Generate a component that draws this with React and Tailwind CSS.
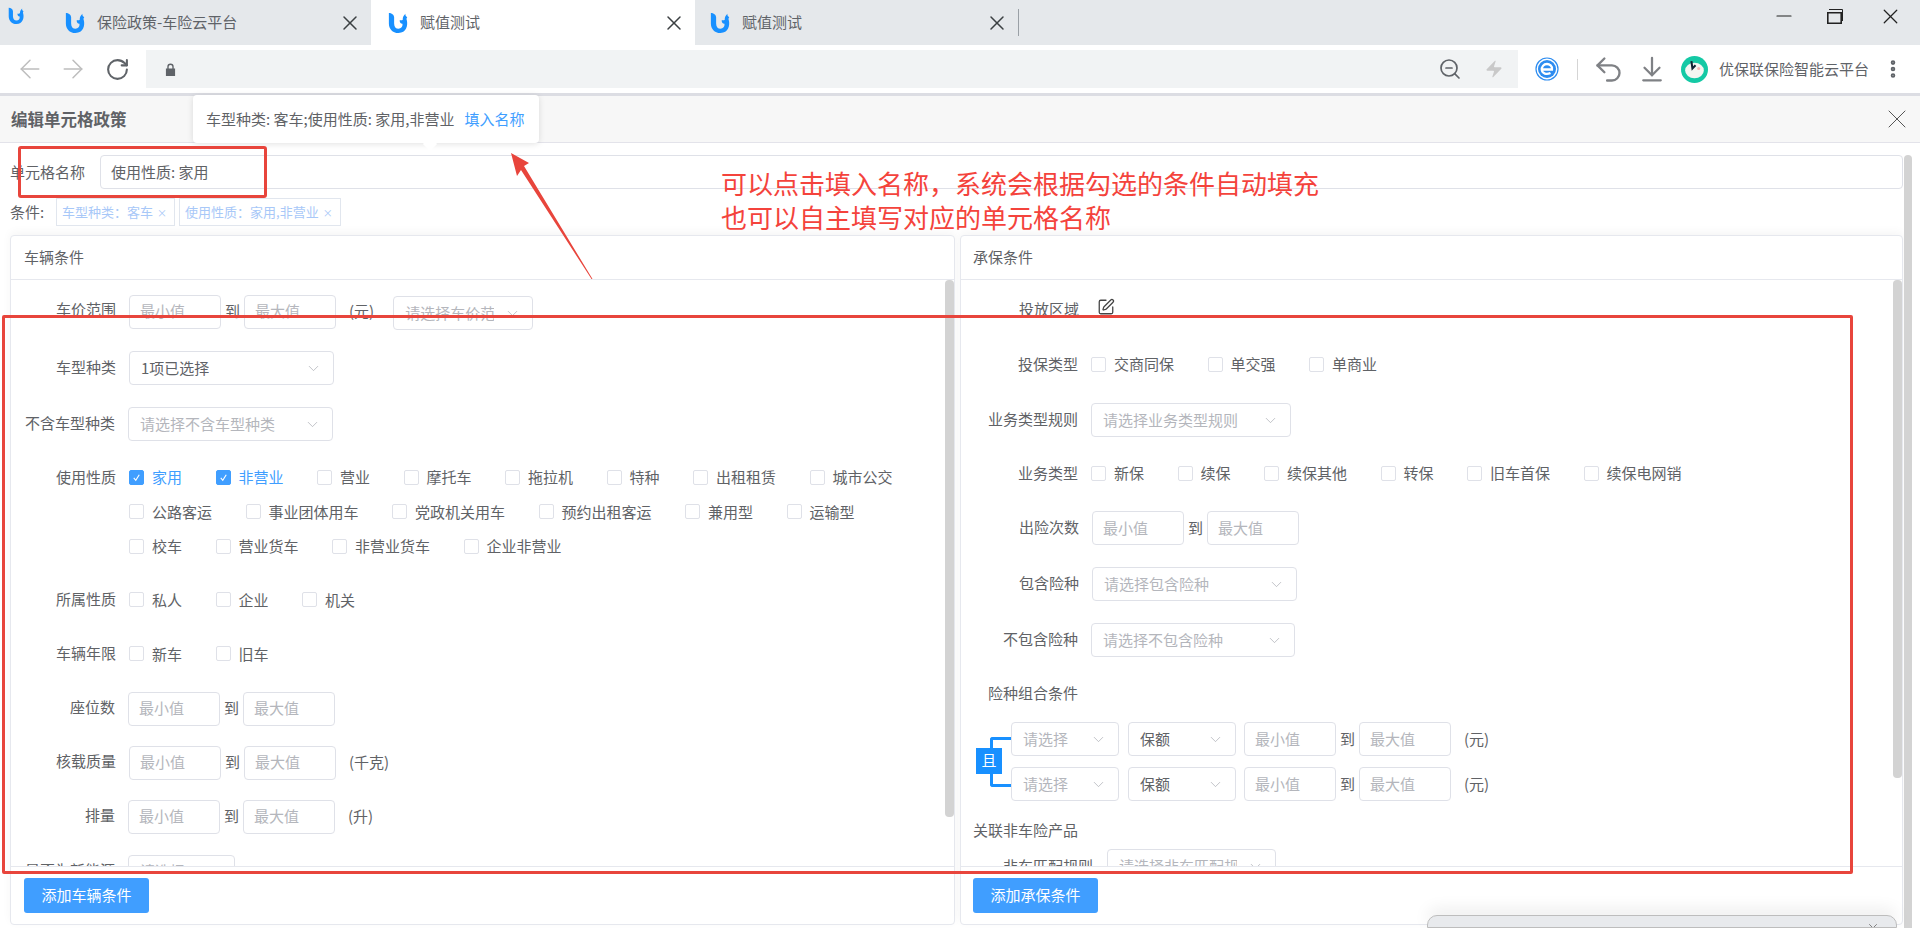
import React from "react";
import { ArrowLeft, ArrowRight, RotateCw, ZoomOut, Zap, Undo2, ArrowDownToLine, EllipsisVertical, X, Minus, SquarePen, ChevronDown } from "lucide-react";

const Logo = ({ className }) => (
  <svg viewBox="0 0 24 24" className={className}>
    <path
      fill="#1890ff"
      d="M1 1C4 1 7 3 7 6V13C7 17 9 19 12 19C15 19 17 17 16.5 13.5C14 13 13 11 13.5 9C15 10 16 9.5 17 8.5C16.5 7 17.5 4 20 2C19.5 4 20.5 5 22 6C21 7 21 8 21.5 9.5C23 15 21 24 12 24C5 24 1 19 1 13Z"
    />
  </svg>
);

const Tab = ({ title, active, width, left }) => (
  <div className={`flex items-center h-[45px] ${width} ${left} pr-[9px] ${active ? "bg-white" : ""}`}>
    <Logo className="w-[21px] h-[23px] shrink-0" />
    <span className="ml-[11px] text-[15px] text-[#5f6368]">{title}</span>
    <X size={24} strokeWidth={1.5} className="ml-auto text-[#3c4043]" />
  </div>
);

const Checkbox = ({ label, checked }) => (
  <div className="flex items-center h-full">
    <span
      className={`w-[15px] h-[15px] rounded-[2px] border flex items-center justify-center ${
        checked ? "bg-[#409eff] border-[#409eff]" : "bg-white border-[#dfe1e8]"
      }`}
    >
      {checked && (
        <svg viewBox="0 0 12 12" className="w-[11px] h-[11px]">
          <path d="M3 6.5L5.2 9L9 3" fill="none" stroke="white" strokeWidth="1.2" />
        </svg>
      )}
    </span>
    <span className={`ml-[8px] ${checked ? "text-[#409eff]" : "text-[#606266]"}`}>{label}</span>
  </div>
);

const CheckGroup = ({ items, checked = [] }) => (
  <div className="flex flex-wrap gap-x-[33.5px] w-[780px]">
    {items.map((item) => (
      <div key={item} className="h-[34.5px]">
        <Checkbox label={item} checked={checked.includes(item)} />
      </div>
    ))}
  </div>
);

const NumInput = ({ placeholder }) => (
  <div className="w-[92px] h-[34px] border border-[#dfe1e8] rounded-[4px] pl-[10px] flex items-center text-[#b4b6bc] bg-white shrink-0">
    {placeholder}
  </div>
);

const Range = ({ unit }) => (
  <div className="flex items-center">
    <NumInput placeholder="最小值" />
    <span className="mx-[4px] text-[#606266]">到</span>
    <NumInput placeholder="最大值" />
    {unit && <span className="ml-[13px] text-[#606266]">{unit}</span>}
  </div>
);

const Select = ({ width, text, value }) => (
  <div className={`${width} h-[34px] border border-[#dfe1e8] rounded-[4px] pl-[11px] pr-[11px] flex items-center justify-between gap-[10px] bg-white shrink-0`}>
    <span className={`min-w-0 overflow-hidden whitespace-nowrap ${value ? "text-[#606266]" : "text-[#b4b6bc]"}`}>{text}</span>
    <ChevronDown size={17} strokeWidth={1} className="text-[#a8abb2] shrink-0" />
  </div>
);

const Row = ({ label, labelW, margin, children, tall, check }) => (
  <div className={`flex ${margin} ${tall ? "" : "h-[34px] items-center"}`}>
    <div className={`${labelW} shrink-0 text-right text-[#606266] whitespace-nowrap ${check ? "" : "pb-[2px]"} ${tall ? "h-[34.5px] flex items-center justify-end" : ""}`}>
      {label}
    </div>
    <div className="ml-[13px] h-full">{children}</div>
  </div>
);

const Panel = ({ title, button, width, thumb, pad, children }) => (
  <div className={`${width} h-[690px] border border-[#e6e8ee] rounded-[4px] bg-white shadow-[0_-3px_10px_rgba(0,0,0,0.04)] flex flex-col`}>
    <div className={`h-[44px] shrink-0 border-b border-[#e6e8ee] ${pad} flex items-center text-[#606266]`}>{title}</div>
    <div className="flex h-[587px] shrink-0 border-b border-[#e6e8ee]">
      <div className="flex-1 overflow-hidden">{children}</div>
      <div className={`w-[9px] ${thumb} bg-[#d3d3d3] rounded-t-[4px] rounded-b-[4px]`} />
    </div>
    <div className={`${pad} pt-[11px]`}>
      <button className="w-[125px] h-[35px] rounded-[3px] bg-[#409eff] text-white text-[15px]">{button}</button>
    </div>
  </div>
);

const CoverRow = () => (
  <div className="flex items-center">
    <Select width="w-[108px]" text="请选择" />
    <div className="ml-[9px]">
      <Select width="w-[108px]" text="保额" value />
    </div>
    <div className="ml-[8px]">
      <Range unit="(元)" />
    </div>
  </div>
);

const LeftPanel = () => {
  const w = "w-[105px]";
  const ws = "w-[104px]";
  return (
    <Panel title="车辆条件" button="添加车辆条件" width="w-[945px]" thumb="h-[537px]" pad="pl-[13px]">
      <Row label="车价范围" labelW={w} margin="mt-[13px]">
        <div className="flex items-center">
          <Range unit="(元)" />
          <div className="ml-[19px] mt-[3px]">
            <Select width="w-[140px]" text="请选择车价范围" />
          </div>
        </div>
      </Row>
      <Row label="车型种类" labelW={w} margin="mt-[24px]">
        <Select width="w-[205px]" text="1项已选择" value />
      </Row>
      <Row label="不含车型种类" labelW={ws} margin="mt-[22px]">
        <Select width="w-[205px]" text="请选择不含车型种类" />
      </Row>
      <Row label="使用性质" labelW={w} margin="mt-[19px]" tall check>
        <CheckGroup
          checked={["家用", "非营业"]}
          items={["家用", "非营业", "营业", "摩托车", "拖拉机", "特种", "出租租赁", "城市公交", "公路客运", "事业团体用车", "党政机关用车", "预约出租客运", "兼用型", "运输型", "校车", "营业货车", "非营业货车", "企业非营业"]}
        />
      </Row>
      <Row label="所属性质" labelW={w} margin="mt-[19px]" check>
        <CheckGroup items={["私人", "企业", "机关"]} />
      </Row>
      <Row label="车辆年限" labelW={w} margin="mt-[20px]" check>
        <CheckGroup items={["新车", "旧车"]} />
      </Row>
      <Row label="座位数" labelW={ws} margin="mt-[21px]">
        <Range />
      </Row>
      <Row label="核载质量" labelW={w} margin="mt-[20px]">
        <Range unit="(千克)" />
      </Row>
      <Row label="排量" labelW={ws} margin="mt-[20px]">
        <Range unit="(升)" />
      </Row>
      <Row label="是否为新能源" labelW={ws} margin="mt-[21px]">
        <Select width="w-[107px]" text="请选择" />
      </Row>
    </Panel>
  );
};

const RightPanel = () => {
  const w = "w-[118px]";
  const ws = "w-[117px]";
  return (
    <Panel title="承保条件" button="添加承保条件" width="flex-1" thumb="h-[498px]" pad="pl-[12px]">
      <Row label="投放区域" labelW={w} margin="mt-[13px]">
        <div className="flex items-center h-full ml-[5px]">
          <SquarePen size={18} strokeWidth={1.7} className="text-[#444] -mt-[6px]" />
        </div>
      </Row>
      <Row label="投保类型" labelW={ws} margin="mt-[20px]" check>
        <CheckGroup items={["交商同保", "单交强", "单商业"]} />
      </Row>
      <Row label="业务类型规则" labelW={ws} margin="mt-[22px]">
        <Select width="w-[200px]" text="请选择业务类型规则" />
      </Row>
      <Row label="业务类型" labelW={ws} margin="mt-[19px]" check>
        <CheckGroup items={["新保", "续保", "续保其他", "转保", "旧车首保", "续保电网销"]} />
      </Row>
      <Row label="出险次数" labelW={w} margin="mt-[21px]">
        <Range />
      </Row>
      <Row label="包含险种" labelW={w} margin="mt-[22px]">
        <Select width="w-[205px]" text="请选择包含险种" />
      </Row>
      <Row label="不包含险种" labelW={ws} margin="mt-[22px]">
        <Select width="w-[204px]" text="请选择不包含险种" />
      </Row>
      <Row label="险种组合条件" labelW={ws} margin="mt-[20px]" />
      <div className="flex items-center mt-[11px] pl-[29px]">
        <div className="relative w-[21px] h-[50px] border-l-[3px] border-y-[3px] border-[#1890ff] rounded-l-[3px]">
          <div className="absolute left-[-17px] top-[8px] w-[26px] h-[26px] bg-[#1890ff] text-white flex items-center justify-center">且</div>
        </div>
        <div className="flex flex-col gap-[11px]">
          <CoverRow />
          <CoverRow />
        </div>
      </div>
      <div className="mt-[12px] h-[34px] flex items-center pl-[12px] text-[#606266]">关联非车险产品</div>
      <div className="flex items-center mt-[2px] h-[34px]">
        <div className="w-[132px] text-right text-[#606266] shrink-0">非车匹配规则</div>
        <div className="ml-[14px]">
          <Select width="w-[169px]" text="请选择非车匹配规则" />
        </div>
      </div>
    </Panel>
  );
};

const Browser = () => (
  <>
    <div className="flex h-[45px] bg-[#e5e8eb] shrink-0 items-center">
      <Tab title="保险政策-车险云平台" width="w-[371px]" left="pl-[65px]" />
      <Tab title="赋值测试" active width="w-[324px]" left="pl-[17px]" />
      <Tab title="赋值测试" width="w-[323px]" left="pl-[15px]" />
      <div className="w-px h-[27px] bg-[#9aa0a6]" />
      <div className="ml-auto flex items-center text-[#222] mb-[13px]">
        <Minus size={24} strokeWidth={1.2} />
        <svg viewBox="0 0 16 16" className="w-[16px] h-[16px] ml-[31px]" fill="none" stroke="#222">
          <path d="M0.8 4.8H14.2V15.2H0.8Z" strokeWidth="1.6" />
          <path d="M2 1.5H15.5V13" strokeWidth="1" />
        </svg>
        <X size={25} strokeWidth={1.2} className="ml-[35px] mr-[17px]" />
      </div>
    </div>
    <div className="h-[48px] shrink-0 bg-white flex items-center pt-[5px] pb-[5px] text-[#bdbdbd]">
      <ArrowLeft size={30} strokeWidth={1.2} className="ml-[15px]" />
      <ArrowRight size={30} strokeWidth={1.2} className="ml-[13px]" />
      <RotateCw size={25} strokeWidth={2} className="ml-[17px] text-[#5f6368]" />
      <div className="ml-[16px] w-[1372px] h-[38px] bg-[#f1f3f4] flex items-center pl-[19px] pr-[14px]">
        <svg viewBox="0 0 12 14" className="w-[11px] h-[15px]">
          <path fill="#5f6368" d="M1 6H2.5V4A3.5 3.5 0 0 1 9.5 4V6H11V14H1ZM4 6H8V4A2 2 0 0 0 4 4Z" />
        </svg>
        <ZoomOut size={24} strokeWidth={1.7} className="ml-auto text-[#5f6368]" />
        <Zap size={20} fill="#c9c9c9" strokeWidth={0} className="ml-[22px]" />
      </div>
      <svg viewBox="0 0 24 24" className="w-[24px] h-[24px] ml-[17px]">
        <circle cx="12" cy="12" r="11" fill="white" stroke="#2d8cf0" strokeWidth="1.2" />
        <circle cx="12" cy="12" r="9" fill="#2d8cf0" />
        <path d="M7 12.5H17C17.5 9 14.5 7 12 7C8.5 7 6.5 10 6.8 13C7.2 16.5 11.5 18 15.5 16" fill="none" stroke="white" strokeWidth="2.3" />
      </svg>
      <div className="ml-[18px] w-px h-[21px] bg-[#d5d5d5]" />
      <Undo2 size={33} strokeWidth={1.7} className="ml-[14px] text-[#7f8185]" />
      <ArrowDownToLine size={30} strokeWidth={1.8} className="ml-[12px] text-[#7f8185]" />
      <svg viewBox="0 0 26 26" className="w-[27px] h-[27px] ml-[14px]">
        <circle cx="13" cy="13" r="13" fill="#14c9a5" />
        <ellipse cx="13" cy="14" rx="9" ry="7.5" fill="#f4f6f2" />
        <path d="M10 5L11 12L14 9" fill="none" stroke="#123" strokeWidth="2" />
        <circle cx="17" cy="12" r="1.5" fill="#f3b7b7" />
      </svg>
      <span className="ml-[11px] text-[15px] text-[#5f6368] whitespace-nowrap">优保联保险智能云平台</span>
      <EllipsisVertical size={22} strokeWidth={3} className="ml-[13px] text-[#5f6368]" />
    </div>
    <div className="h-[3px] bg-[#dcdde3] shrink-0" />
  </>
);

const Overlays = () => (
  <>
    <Logo className="absolute left-[8px] top-[7px] w-[17px] h-[17px]" />

    <div className="absolute left-[193px] top-[95px] w-[346px] h-[48px] bg-white rounded-[4px] shadow-[0_1px_6px_rgba(0,0,0,0.12)] flex items-center pl-[13px]">
      <span className="text-[#606266]">车型种类: 客车;使用性质: 家用,非营业</span>
      <span className="ml-[10px] text-[#409eff]">填入名称</span>
      <div className="absolute left-[232px] top-[44px] w-[10px] h-[10px] rotate-45 bg-white" />
    </div>

    <div className="absolute left-[18px] top-[146px] w-[249px] h-[52px] border-[3px] border-[#e8453c] rounded-[3px]" />
    <div className="absolute left-[2px] top-[315px] w-[1851px] h-[559px] border-[3px] border-[#e8453c] rounded-[2px]" />

    <div className="absolute left-[721px] top-[166px] text-[26px] leading-[34px] text-[#f4433c] whitespace-nowrap">
      <div>可以点击填入名称，系统会根据勾选的条件自动填充</div>
      <div>也可以自主填写对应的单元格名称</div>
    </div>

    <svg className="absolute left-[500px] top-[150px] w-[100px] h-[132px]" viewBox="500 150 100 132">
      <polygon fill="#e8453c" points="511,153 529,163 524,166 592.5,279 591.5,279 521,170 517,176" />
    </svg>

    <div className="absolute left-[1427px] top-[915px] w-[470px] h-[13px] overflow-hidden bg-[#e8eaed] border border-[#bdbdbd] rounded-t-[10px] shadow-[0_-6px_16px_rgba(0,0,0,0.08)] flex justify-end pr-[16px]">
      <X size={14} strokeWidth={1.6} className="text-[#777] mt-[5px]" />
    </div>
  </>
);

export default function App() {
  return (
    <div className="relative w-[1920px] h-[928px] overflow-hidden bg-white flex flex-col text-[15px] font-['Noto_Sans_CJK_SC','Noto_Sans',sans-serif]">
      <Browser />
      <div className="h-[47px] shrink-0 bg-[#f7f7f7] border-b border-[#e3e3ea] pl-[11px] pr-[7px] flex items-center justify-between">
        <span className="text-[16.5px] font-bold text-[#606266]">编辑单元格政策</span>
        <X size={32} strokeWidth={0.75} className="text-[#555]" />
      </div>
      <div className="flex flex-1">
        <div className="w-[1904px] pl-[10px] pr-[1px] pt-[12px]">
          <div className="flex items-center h-[34px]">
            <span className="w-[90px] text-[#606266] shrink-0">单元格名称</span>
            <div className="flex-1 h-[34px] border border-[#dfe1e8] rounded-[4px] pl-[10px] flex items-center text-[#606266]">使用性质: 家用</div>
          </div>
          <div className="flex items-center h-[28px] mt-[9px]">
            <span className="text-[#606266] w-[46px]">条件:</span>
            <div className="flex gap-[4px]">
              {["车型种类：客车", "使用性质：家用,非营业"].map((tag) => (
                <div key={tag} className="h-[28px] border border-[#e1e6ee] pl-[5px] pr-[4px] flex items-center text-[13px] text-[#a8c8f8]">
                  {tag}
                  <span className="ml-[4px] mr-[3px] text-[10px]">×</span>
                </div>
              ))}
            </div>
          </div>
          <div className="flex gap-[5px] mt-[9px]">
            <LeftPanel />
            <RightPanel />
          </div>
        </div>
        <div className="w-[8px] mt-[12px] bg-[#d3d3d3] rounded-t-[4px]" />
      </div>
      <Overlays />
    </div>
  );
}
